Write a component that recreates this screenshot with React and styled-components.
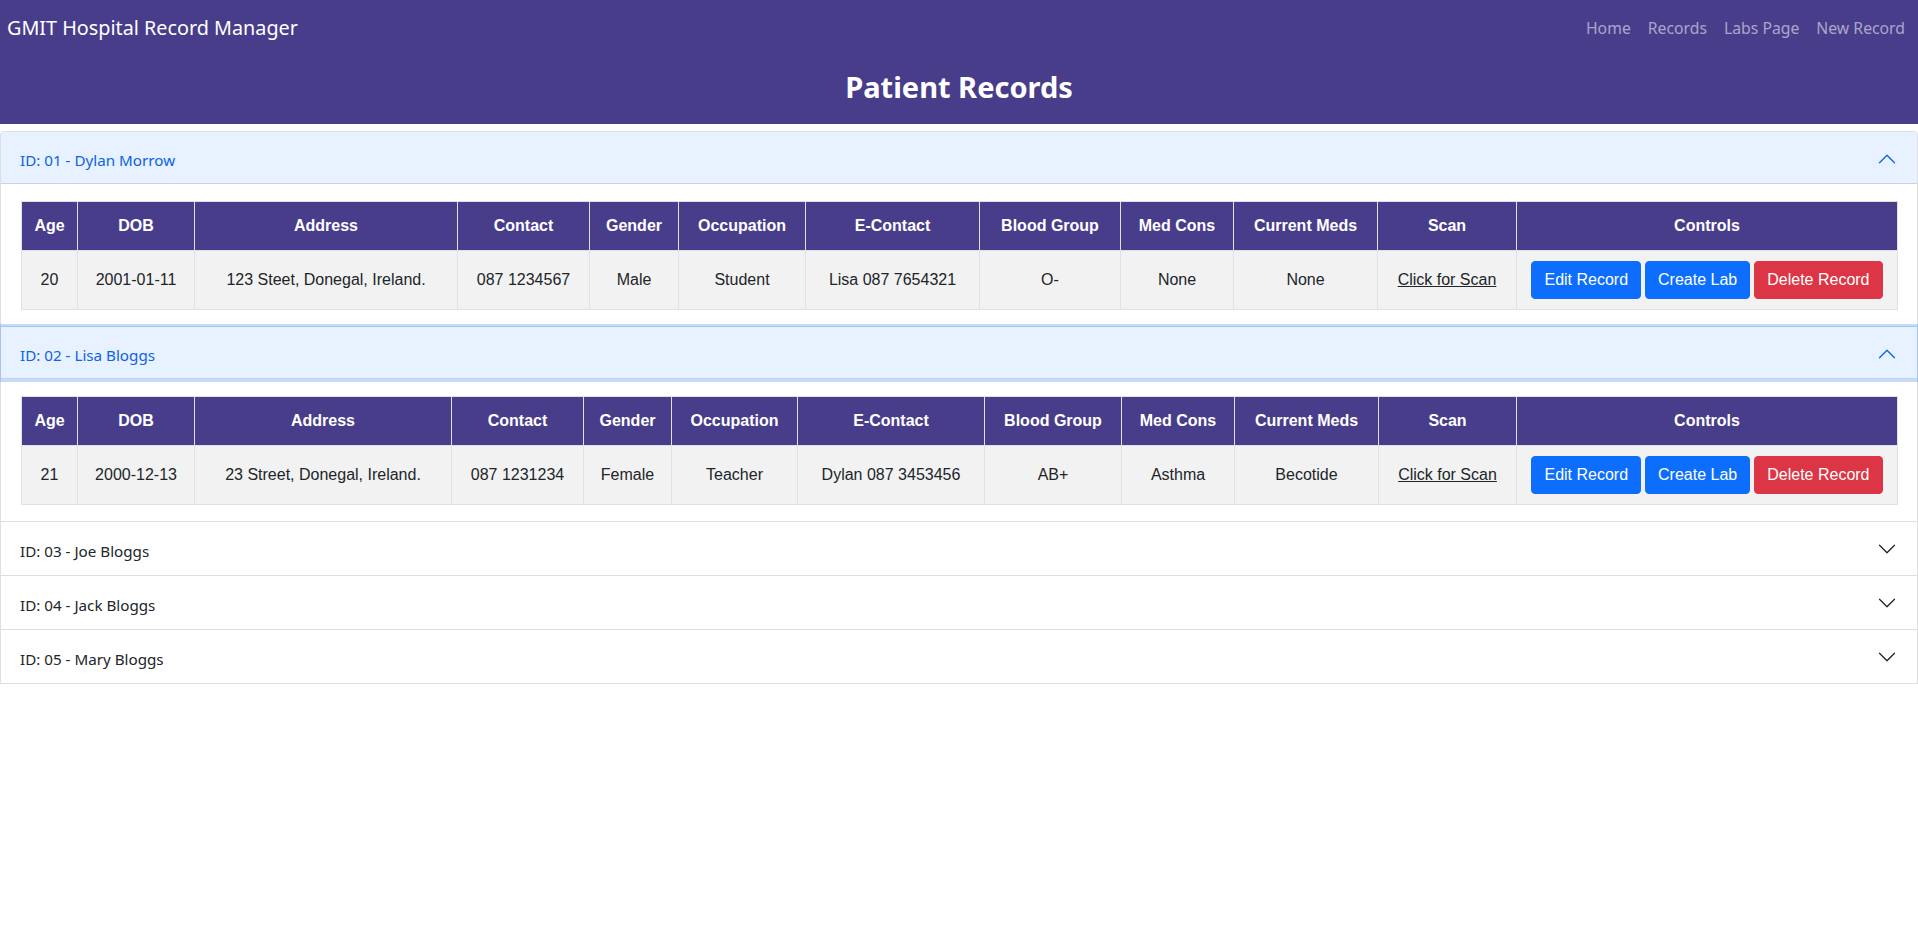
import React, { useState } from 'react';
import styled, { createGlobalStyle } from 'styled-components';

const GlobalStyle = createGlobalStyle`
  body {
    margin: 0;
    background: #fff;
    font-family: "Noto Sans", "Open Sans", sans-serif;
    color: #212529;
  }
`;

// Top purple header with brand, links and page title
const Header = styled.header`
  background-color: #483d8b;
  height: 124px;
  box-sizing: border-box;
`;

const NavRow = styled.div`
  display: flex;
  justify-content: space-between;
  align-items: center;
  padding: 13px 13px 0 7px;
`;

const Brand = styled.a`
  color: #fff;
  font-size: 19.8px;
  line-height: 30px;
  text-decoration: none;
`;

const Menu = styled.nav`
  display: flex;
  gap: 17px;
`;

const MenuLink = styled.a`
  color: rgba(255, 255, 255, 0.55);
  font-size: 15.75px;
  line-height: 24px;
  text-decoration: none;

  &:hover {
    color: rgba(255, 255, 255, 0.75);
  }
`;

const Title = styled.h1`
  margin: 24px 0 0;
  color: #fff;
  text-align: center;
  font-size: 29px;
  line-height: 40px;
  font-weight: 700;
`;

// Accordion
const Accordion = styled.div`
  margin-top: 7px;
`;

const Item = styled.div`
  background: #fff;
  border: 1px solid rgba(0, 0, 0, 0.125);

  & + & {
    border-top: none;
  }

  &:first-child {
    border-top-left-radius: 4px;
    border-top-right-radius: 4px;
  }
`;

const ItemButton = styled.button`
  position: relative;
  z-index: ${(p) => (p.$focused ? 2 : 0)};
  display: flex;
  align-items: center;
  width: 100%;
  box-sizing: border-box;
  padding: ${(p) => (p.$open ? '18px 20px 14px 19px' : '19px 20px 14px 19px')};
  border: 0;
  background-color: ${(p) => (p.$open ? '#e7f1ff' : '#fff')};
  color: ${(p) => (p.$open ? '#0c63e4' : '#212529')};
  font-family: inherit;
  font-size: 15.2px;
  line-height: 20px;
  text-align: left;
  cursor: pointer;
  box-shadow: ${(p) =>
    p.$focused
      ? '0 0 0 3px rgba(13, 110, 253, 0.25), inset 0 -1px 0 rgba(0, 0, 0, 0.125)'
      : p.$open
      ? 'inset 0 -1px 0 rgba(0, 0, 0, 0.125)'
      : 'none'};
`;

const Chevron = styled.svg`
  margin-left: auto;
  width: 20px;
  height: 20px;
  flex-shrink: 0;
  transform: ${(p) => (p.$open ? 'translateY(-1px) rotate(-180deg)' : 'translateY(-2px)')};
`;

const ItemBody = styled.div`
  padding: 17px 20px 16px;
`;

// Record table
const Table = styled.table`
  width: 100%;
  table-layout: fixed;
  border-collapse: collapse;
  font-family: "Liberation Sans", Arial, sans-serif;
  font-size: 16px;
  line-height: 24px;
  color: #212529;
`;

const Col = styled.col`
  width: ${(p) => p.$w}px;
`;

const Th = styled.th`
  background-color: #483d8b;
  color: #fff;
  font-weight: bold;
  padding: 12px 4px;
  border: 1px solid #dee2e6;
  text-align: center;
  vertical-align: middle;
  white-space: nowrap;
`;

const Td = styled.td`
  background-color: #f2f2f2;
  padding: 10px 4px;
  border: 1px solid #dee2e6;
  text-align: center;
  vertical-align: middle;
  white-space: nowrap;
`;

const ScanLink = styled.a`
  color: #212529;
  text-decoration: underline;
  cursor: pointer;
`;

const Controls = styled.div`
  display: inline-flex;
  gap: 4px;
`;

const Button = styled.button`
  font-family: inherit;
  font-size: 16px;
  line-height: 24px;
  padding: 6px 12px;
  border-radius: 4px;
  color: #fff;
  border: 1px solid ${(p) => (p.$variant === 'danger' ? '#dc3545' : '#0d6efd')};
  background-color: ${(p) => (p.$variant === 'danger' ? '#dc3545' : '#0d6efd')};
  cursor: pointer;
`;

const columns = [
  'Age', 'DOB', 'Address', 'Contact', 'Gender', 'Occupation',
  'E-Contact', 'Blood Group', 'Med Cons', 'Current Meds', 'Scan', 'Controls',
];

const patients = [
  {
    id: '01', name: 'Dylan Morrow', age: 20, dob: '2001-01-11',
    address: '123 Steet, Donegal, Ireland.', contact: '087 1234567', gender: 'Male',
    occupation: 'Student', econtact: 'Lisa 087 7654321', blood: 'O-', cons: 'None', meds: 'None',
    widths: [56, 117, 263, 132, 89, 127, 174, 141, 113, 144, 139, 381],
  },
  {
    id: '02', name: 'Lisa Bloggs', age: 21, dob: '2000-12-13',
    address: '23 Street, Donegal, Ireland.', contact: '087 1231234', gender: 'Female',
    occupation: 'Teacher', econtact: 'Dylan 087 3453456', blood: 'AB+', cons: 'Asthma', meds: 'Becotide',
    widths: [56, 117, 257, 132, 88, 126, 187, 137, 113, 144, 138, 381],
  },
  { id: '03', name: 'Joe Bloggs' },
  { id: '04', name: 'Jack Bloggs' },
  { id: '05', name: 'Mary Bloggs' },
];

const ChevronIcon = ({ open }) => (
  <Chevron $open={open} viewBox="0 0 16 16">
    <path
      fill={open ? '#0c63e4' : '#212529'}
      fillRule="evenodd"
      d="M1.646 4.646a.5.5 0 0 1 .708 0L8 10.293l5.646-5.647a.5.5 0 0 1 .708.708l-6 6a.5.5 0 0 1-.708 0l-6-6a.5.5 0 0 1 0-.708z"
    />
  </Chevron>
);

const RecordTable = ({ p }) => (
  <Table>
    <colgroup>
      {p.widths.map((w, i) => (
        <Col key={i} $w={w} />
      ))}
    </colgroup>
    <thead>
      <tr>
        {columns.map((c) => (
          <Th key={c}>{c}</Th>
        ))}
      </tr>
    </thead>
    <tbody>
      <tr>
        <Td>{p.age}</Td>
        <Td>{p.dob}</Td>
        <Td>{p.address}</Td>
        <Td>{p.contact}</Td>
        <Td>{p.gender}</Td>
        <Td>{p.occupation}</Td>
        <Td>{p.econtact}</Td>
        <Td>{p.blood}</Td>
        <Td>{p.cons}</Td>
        <Td>{p.meds}</Td>
        <Td>
          <ScanLink>Click for Scan</ScanLink>
        </Td>
        <Td>
          <Controls>
            <Button>Edit Record</Button>
            <Button>Create Lab</Button>
            <Button $variant="danger">Delete Record</Button>
          </Controls>
        </Td>
      </tr>
    </tbody>
  </Table>
);

const App = () => {
  const [open, setOpen] = useState(['01', '02']); // expanded records

  const toggle = (id) =>
    setOpen((o) => (o.includes(id) ? o.filter((x) => x !== id) : [...o, id]));

  return (
    <>
      <GlobalStyle />
      <Header>
        <NavRow>
          <Brand href="#">GMIT Hospital Record Manager</Brand>
          <Menu>
            <MenuLink href="#">Home</MenuLink>
            <MenuLink href="#">Records</MenuLink>
            <MenuLink href="#">Labs Page</MenuLink>
            <MenuLink href="#">New Record</MenuLink>
          </Menu>
        </NavRow>
        <Title>Patient Records</Title>
      </Header>

      <Accordion>
        {patients.map((p) => {
          const isOpen = open.includes(p.id);
          return (
            <Item key={p.id}>
              <ItemButton $open={isOpen} $focused={p.id === '02'} onClick={() => toggle(p.id)}>
                ID: {p.id} - {p.name}
                <ChevronIcon open={isOpen} />
              </ItemButton>
              {isOpen && p.age && (
                <ItemBody>
                  <RecordTable p={p} />
                </ItemBody>
              )}
            </Item>
          );
        })}
      </Accordion>
    </>
  );
};

export default App;
